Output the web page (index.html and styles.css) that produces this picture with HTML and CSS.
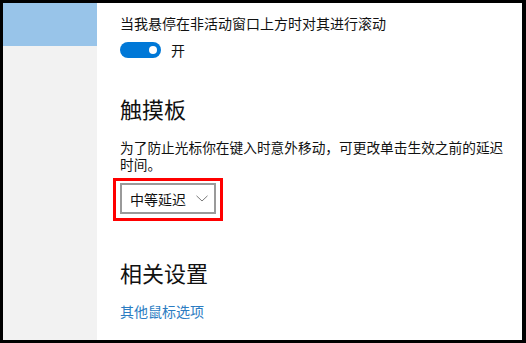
FILE: index.html
```html
<!DOCTYPE html>
<html lang="zh-CN">
<head>
<meta charset="utf-8">
<title>触摸板设置</title>
<link rel="stylesheet" href="styles.css">
</head>
<body>
<div class="frame">
  <aside class="sidebar">
    <div class="sidebar-active"></div>
  </aside>
  <main class="content">
    <div class="setting-label">当我悬停在非活动窗口上方时对其进行滚动</div>
    <div class="toggle-row">
      <span class="toggle"><span class="knob"></span></span>
      <span class="toggle-text">开</span>
    </div>
    <h2 class="section-title title-touchpad">触摸板</h2>
    <p class="desc">为了防止光标你在键入时意外移动，可更改单击生效之前的延迟时间。</p>
    <div class="highlight">
      <div class="dropdown">
        <span class="dropdown-text">中等延迟</span>
        <svg class="chevron" width="12" height="7" viewBox="0 0 12 7"><path d="M0.5 0.8 L6 6 L11.5 0.8" fill="none" stroke="#7a7a7a" stroke-width="1"/></svg>
      </div>
    </div>
    <h2 class="section-title title-related">相关设置</h2>
    <a class="link" href="#">其他鼠标选项</a>
  </main>
</div>
</body>
</html>
```
FILE: styles.css
```css
html, body {
  margin: 0;
  padding: 0;
  background: #000;
}
body {
  font-family: "Noto Sans CJK SC", "Noto Sans", sans-serif;
  color: #111;
}
.frame {
  box-sizing: border-box;
  width: 526px;
  height: 343px;
  border-style: solid;
  border-color: #000;
  border-width: 3px 4px 3px 3px;
  display: flex;
  overflow: hidden;
}
.sidebar {
  width: 94px;
  flex: none;
  background: #f2f2f2;
}
.sidebar-active {
  height: 43px;
  background: #98c4e9;
}
.content {
  flex: 1;
  background: #fff;
  padding: 9.5px 8px 0 23px;
  min-width: 0;
}
.setting-label {
  font-size: 14px;
  line-height: 20px;
  white-space: nowrap;
}
.toggle-row {
  margin-top: 7.5px;
  height: 20px;
  display: flex;
  align-items: center;
}
.toggle {
  width: 41px;
  height: 16px;
  border-radius: 8px;
  background: #0078d7;
  display: flex;
  align-items: center;
  justify-content: flex-end;
  box-sizing: border-box;
  padding-right: 4px;
}
.knob {
  width: 8px;
  height: 8px;
  border-radius: 50%;
  background: #fff;
}
.toggle-text {
  margin-left: 10px;
  font-size: 14px;
  line-height: 20px;
}
.section-title {
  margin: 0;
  font-weight: normal;
  font-size: 22px;
  line-height: 30px;
  color: #111;
}
.title-touchpad {
  margin-top: 33px;
}
.desc {
  margin: 16px 0 0 0;
  font-size: 13.7px;
  line-height: 16.5px;
  width: 392px;
}
.highlight {
  display: inline-block;
  margin-top: 6px;
  margin-left: -7px;
  border: 3px solid #f00;
  padding: 2px 4px 4px 4px;
}
.dropdown {
  box-sizing: border-box;
  width: 96px;
  height: 31px;
  border: 2px solid #9a9a9a;
  display: flex;
  align-items: center;
  padding-left: 8px;
  background: #fff;
}
.dropdown-text {
  font-size: 14px;
  line-height: 20px;
}
.chevron {
  margin-left: 10px;
}
.title-related {
  margin-top: 35.5px;
}
.link {
  display: block;
  margin-top: 14.5px;
  font-size: 14px;
  line-height: 20px;
  color: #2b7cc2;
  text-decoration: none;
}
```
